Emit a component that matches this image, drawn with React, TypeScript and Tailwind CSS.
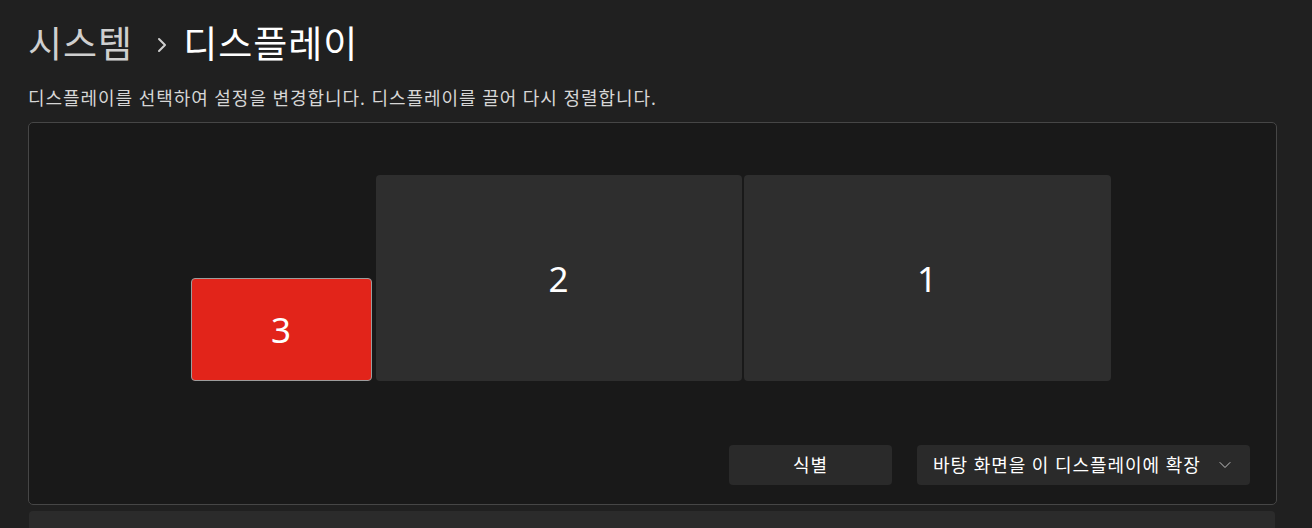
import { ChevronDown } from 'lucide-react';

const font = { fontFamily: '"Noto Sans", "Noto Sans CJK KR", sans-serif' };

const monitors = [
  { id: '3', w: 'w-[181px]', h: 'h-[103px]', cls: 'bg-[#e2241a] border border-[#9c9c9c] mr-[4px]' },
  { id: '2', w: 'w-[366px]', h: 'h-[206px]', cls: 'bg-[#2e2e2e] mr-[2px]' },
  { id: '1', w: 'w-[367px]', h: 'h-[206px]', cls: 'bg-[#2e2e2e]' },
];

const App = () => {
  return (
    <div className="w-[1312px] h-[528px] overflow-hidden bg-[#202020] text-white" style={font}>
      <div className="pl-[28px] pt-[20px]">
        {/* breadcrumb title */}
        <div className="flex items-center h-[48px] text-[37px] leading-[48px] tracking-[1px]">
          <span className="text-[#cfcfcf]">시스템</span>
          <svg width="10" height="16" viewBox="0 0 10 16" className="ml-[24px] mr-[16px] mt-[2px]">
            <polyline points="2,2 8,8 2,14" fill="none" stroke="#cfcfcf" strokeWidth="2" strokeLinecap="round" strokeLinejoin="round" />
          </svg>
          <span>디스플레이</span>
        </div>

        <p className="mt-[18px] text-[18px] leading-[24px] tracking-[0.95px] text-[#d6d6d6]">
          디스플레이를 선택하여 설정을 변경합니다. 디스플레이를 끌어 다시 정렬합니다.
        </p>

        {/* arrangement panel */}
        <div className="mt-[12px] w-[1249px] h-[383px] rounded-[5px] border border-[#464646] bg-[#191919] flex flex-col">
          <div className="flex justify-center items-end pt-[52px] pr-[4px]">
            {monitors.map((m) => (
              <div
                key={m.id}
                className={`${m.w} ${m.h} ${m.cls} rounded-[4px] flex items-center justify-center`}
              >
                <span className="text-[35px] leading-none" style={{ fontFamily: '"Noto Sans", sans-serif' }}>
                  {m.id}
                </span>
              </div>
            ))}
          </div>

          <div className="flex justify-end gap-[25px] pr-[26px] mt-[64px]">
            <button className="w-[163px] h-[40px] rounded-[4px] bg-[#2a2a2a] text-[18px] tracking-[0.95px] text-white">
              식별
            </button>
            <button className="w-[333px] h-[40px] rounded-[4px] bg-[#2a2a2a] text-[18px] tracking-[0.95px] text-white flex items-center justify-between pl-[16px] pr-[15px]">
              <span>바탕 화면을 이 디스플레이에 확장</span>
              <ChevronDown size={20} strokeWidth={1.1} className="text-[#cfcfcf]" />
            </button>
          </div>
        </div>

        <div className="mt-[6px] ml-[1px] w-[1246px] h-[40px] rounded-[4px] bg-[#2b2b2b]" />
      </div>
    </div>
  );
};

export default App;
